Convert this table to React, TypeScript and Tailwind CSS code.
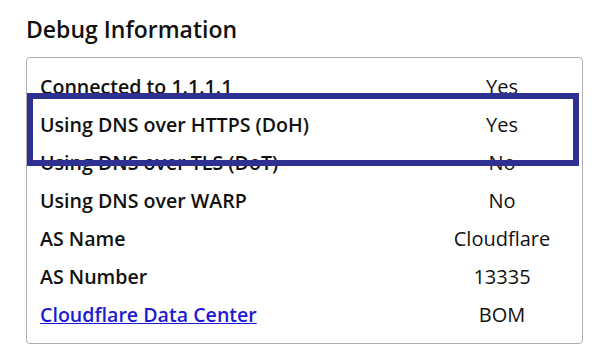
import React from "react";

const rows: { label: string; value: string; link?: boolean }[] = [
  { label: "Connected to 1.1.1.1", value: "Yes" },
  { label: "Using DNS over HTTPS (DoH)", value: "Yes" },
  { label: "Using DNS over TLS (DoT)", value: "No" },
  { label: "Using DNS over WARP", value: "No" },
  { label: "AS Name", value: "Cloudflare" },
  { label: "AS Number", value: "13335" },
  { label: "Cloudflare Data Center", value: "BOM", link: true },
];

export default function App() {
  return (
    <div
      className="relative w-[606px] h-[356px] bg-white text-[#111] overflow-hidden"
      style={{ fontFamily: '"Open Sans", "Noto Sans", sans-serif' }}
    >
      <div className="pl-[26px] pt-[13px]">
        <h2 className="text-[23px] leading-[32px] font-semibold">Debug Information</h2>
        <div className="mt-[12px] w-[557px] border border-[#b0b0b0] rounded-[4px] pt-[10px] pb-[9px] pl-[13px]">
          {rows.map((r) => (
            <div key={r.label} className="flex h-[38px] items-center leading-[38px]">
              <div className="flex-1 font-semibold text-[19.6px]">
                {r.link ? (
                  <a href="#" className="text-[#1d1ad4] underline">
                    {r.label}
                  </a>
                ) : (
                  r.label
                )}
              </div>
              <div className="w-[150px] mr-[5px] text-center text-[20px]">{r.value}</div>
            </div>
          ))}
        </div>
      </div>
      <div className="absolute left-[27px] top-[93px] w-[552px] h-[73px] border-[6px] border-[#2e3092]" />
    </div>
  );
}
